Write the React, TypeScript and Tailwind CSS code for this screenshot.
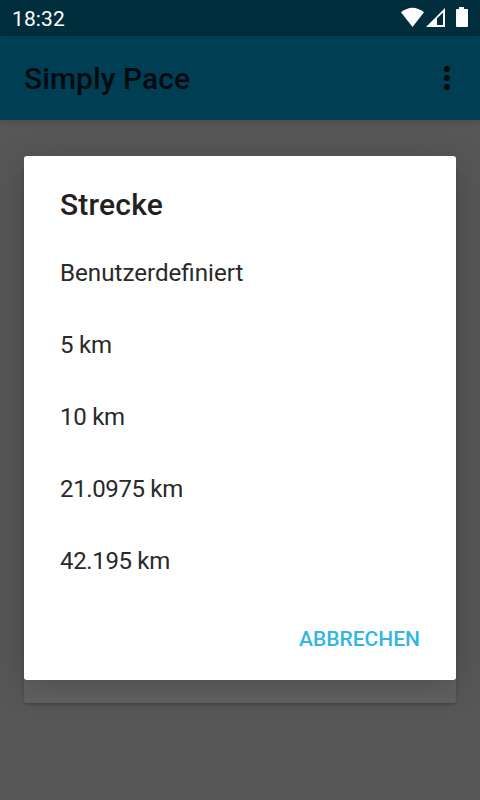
const items = [
  { label: "Benutzerdefiniert", type: "text-[24.15px]" },
  { label: "5 km", type: "text-[24px] tracking-[-0.2px]" },
  { label: "10 km", type: "text-[24px] tracking-[-0.25px]" },
  { label: "21.0975 km", type: "text-[24px] tracking-[-0.36px]" },
  { label: "42.195 km", type: "text-[24px] tracking-[-0.34px]" },
];

export default function App() {
  return (
    <div className="relative h-[800px] w-[480px] overflow-hidden bg-[#575757] font-[Roboto,sans-serif]">
      <div className="flex h-9 items-center justify-between bg-[#002e3c] px-3 text-white">
        <span className="pt-px text-[21px] leading-9 tracking-[0.1px]">18:32</span>
        <svg width="68" height="36" viewBox="400 0 68 36" fill="#fff">
          <path d="M401 12.300Q412.500 3 424 12.300L412.500 27Z" />
          <path d="M426 27L445 8V27Z M437 18.500V25H443V12.500Z" fillRule="evenodd" />
          <path d="M459 7H464V9H467Q468 9 468 10V26Q468 27 467 27H457Q456 27 456 26V10Q456 9 457 9H459Z" />
        </svg>
      </div>
      <header className="flex h-[84px] items-center justify-between bg-[#003e54] pl-6 pr-[30px] shadow-[0_2px_6px_rgba(0,0,0,0.12)]">
        <h1 className="pt-0.5 text-[30px] font-medium leading-9 tracking-[0.06px] text-[#050b0e]">Simply Pace</h1>
        <svg width="6" height="24" viewBox="0 0 6 24" fill="#050b0e">
          <circle cx="3" cy="3" r="3" /><circle cx="3" cy="12" r="3" /><circle cx="3" cy="21" r="3" />
        </svg>
      </header>
      <main className="mx-6 mt-12 h-[535px] rounded-[3px] bg-[#616161] shadow-[0_2px_3px_rgba(0,0,0,0.2)]" />
      <section role="dialog" className="absolute left-6 top-[156px] flex h-[524px] w-[432px] flex-col rounded-[3px] bg-white px-9 pt-[27px] text-[#212121] shadow-[0_6px_32px_rgba(0,0,0,0.2)]">
        <h2 className="h-[54px] text-[30px] font-medium leading-[44px] tracking-[0.2px]">Strecke</h2>
        <ul>
          {items.map(({ label, type }) => (
            <li key={label} className={`flex h-[72px] items-center text-[#292929] ${type}`}>{label}</li>
          ))}
        </ul>
        <button className="mt-[26px] self-end text-[21px] font-medium leading-8 text-[#33b5e5]">ABBRECHEN</button>
      </section>
    </div>
  );
}
